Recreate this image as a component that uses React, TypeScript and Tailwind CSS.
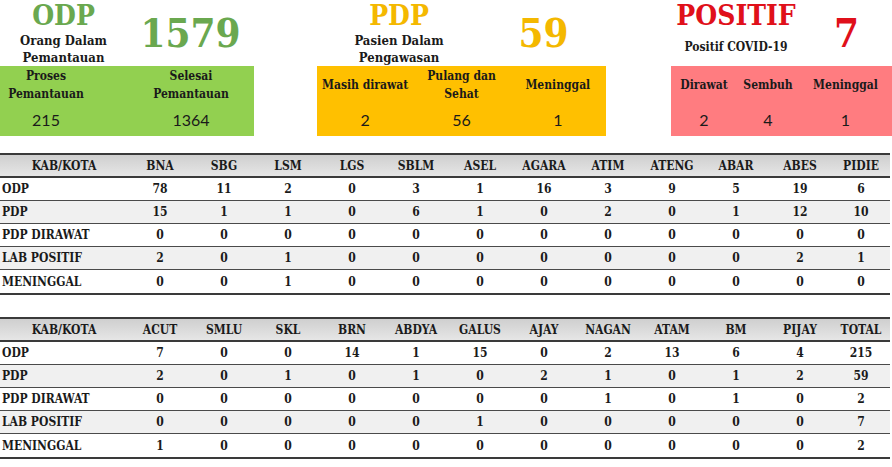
import React from 'react';

const serif = { fontFamily: '"DejaVu Serif Condensed", "DejaVu Serif", serif' };
const sans = { fontFamily: 'Lato, "Open Sans", sans-serif' };

type Row = { label: string; values: number[] };

const table1Cols = ['BNA', 'SBG', 'LSM', 'LGS', 'SBLM', 'ASEL', 'AGARA', 'ATIM', 'ATENG', 'ABAR', 'ABES', 'PIDIE'];
const table1Rows: Row[] = [
  { label: 'ODP', values: [78, 11, 2, 0, 3, 1, 16, 3, 9, 5, 19, 6] },
  { label: 'PDP', values: [15, 1, 1, 0, 6, 1, 0, 2, 0, 1, 12, 10] },
  { label: 'PDP DIRAWAT', values: [0, 0, 0, 0, 0, 0, 0, 0, 0, 0, 0, 0] },
  { label: 'LAB POSITIF', values: [2, 0, 1, 0, 0, 0, 0, 0, 0, 0, 2, 1] },
  { label: 'MENINGGAL', values: [0, 0, 1, 0, 0, 0, 0, 0, 0, 0, 0, 0] },
];

const table2Cols = ['ACUT', 'SMLU', 'SKL', 'BRN', 'ABDYA', 'GALUS', 'AJAY', 'NAGAN', 'ATAM', 'BM', 'PIJAY', 'TOTAL'];
const table2Rows: Row[] = [
  { label: 'ODP', values: [7, 0, 0, 14, 1, 15, 0, 2, 13, 6, 4, 215] },
  { label: 'PDP', values: [2, 0, 1, 0, 1, 0, 2, 1, 0, 1, 2, 59] },
  { label: 'PDP DIRAWAT', values: [0, 0, 0, 0, 0, 0, 0, 1, 0, 1, 0, 2] },
  { label: 'LAB POSITIF', values: [0, 0, 0, 0, 0, 1, 0, 0, 0, 0, 0, 7] },
  { label: 'MENINGGAL', values: [1, 0, 0, 0, 0, 0, 0, 0, 0, 0, 0, 2] },
];

// one cell of a coloured summary box: label on top, number below
function Stat({ label, value }: { label: React.ReactNode; value: number }) {
  return (
    <div className="flex flex-col">
      <div className="h-[38px] flex items-center justify-center text-center text-[12px] leading-[18px] font-bold text-[#1a1a1a]" style={serif}>
        {label}
      </div>
      <div className="h-[32px] flex items-center justify-center text-[16px] text-[#1a1a1a]" style={sans}>
        {value}
      </div>
    </div>
  );
}

function DataTable({ cols, rows }: { cols: string[]; rows: Row[] }) {
  return (
    <div className="w-[890px] border-t-2 border-b-2 border-[#3a3a3a] text-[12px] font-bold text-[#1a1a1a]" style={serif}>
      <div className="grid grid-cols-[128px_repeat(11,64px)_58px] h-[23px] items-center bg-gradient-to-b from-[#cfcfcf] to-[#e6e6e6] border-b-2 border-[#3a3a3a]">
        <div className="text-center">KAB/KOTA</div>
        {cols.map((c) => (
          <div key={c} className="text-center">{c}</div>
        ))}
      </div>
      {rows.map((r, i) => (
        <div
          key={r.label}
          className={`grid grid-cols-[128px_repeat(11,64px)_58px] h-[23px] items-center ${
            i % 2 === 1 ? 'bg-[#f0f0f0]' : 'bg-white'
          } ${i < rows.length - 1 ? 'border-b border-[#4a4a4a]' : ''}`}
        >
          <div className="pl-[2px]">{r.label}</div>
          {r.values.map((v, j) => (
            <div key={j} className="text-center">{v}</div>
          ))}
        </div>
      ))}
    </div>
  );
}

export default function App() {
  return (
    <div className="w-[892px] h-[467px] bg-white overflow-hidden">
      {/* summary boxes */}
      <div className="flex">
        {/* ODP */}
        <div className="w-[254px] flex flex-col">
          <div className="h-[66px] flex">
            <div className="w-[127px] flex flex-col items-center" style={serif}>
              <div className="text-[28px] leading-[28px] pt-[2px] font-bold text-[#6aa84f]">ODP</div>
              <div className="mt-[2px] text-[13px] leading-[17px] font-bold text-[#1a1a1a] text-center">
                Orang Dalam<br />Pemantauan
              </div>
            </div>
            <div className="flex-1 flex items-center justify-center text-[40px] leading-none font-bold text-[#6aa84f]" style={serif}>
              1579
            </div>
          </div>
          <div className="h-[70px] bg-[#92d050] grid grid-cols-[92px_36px_126px]">
            <Stat label={<>Proses<br />Pemantauan</>} value={215} />
            <div />
            <Stat label={<>Selesai<br />Pemantauan</>} value={1364} />
          </div>
        </div>

        {/* PDP */}
        <div className="ml-[63px] w-[289px] flex flex-col">
          <div className="h-[66px] flex">
            <div className="w-[164px] flex flex-col items-center" style={serif}>
              <div className="text-[28px] leading-[28px] pt-[2px] font-bold text-[#f4b800]">PDP</div>
              <div className="mt-[2px] text-[13px] leading-[17px] font-bold text-[#1a1a1a] text-center">
                Pasien Dalam<br />Pengawasan
              </div>
            </div>
            <div className="flex-1 flex items-center justify-center text-[40px] leading-none font-bold text-[#f4b800]" style={serif}>
              59
            </div>
          </div>
          <div className="h-[70px] bg-[#ffc000] grid grid-cols-3">
            <Stat label="Masih dirawat" value={2} />
            <Stat label={<>Pulang dan<br />Sehat</>} value={56} />
            <Stat label="Meninggal" value={1} />
          </div>
        </div>

        {/* POSITIF */}
        <div className="ml-[65px] flex-1 flex flex-col">
          <div className="h-[66px] flex">
            <div className="w-[130px] flex flex-col items-center" style={serif}>
              <div className="text-[28px] leading-[30px] pt-[1px] font-bold text-[#e0101a]">POSITIF</div>
              <div className="mt-[8px] text-[12px] leading-[17px] font-bold text-[#1a1a1a]">Positif COVID-19</div>
            </div>
            <div className="flex-1 flex items-center justify-center text-[40px] leading-none font-bold text-[#e0101a]" style={serif}>
              7
            </div>
          </div>
          <div className="h-[70px] bg-[#ff7c80] grid grid-cols-[66px_62px_1fr]">
            <Stat label="Dirawat" value={2} />
            <Stat label="Sembuh" value={4} />
            <Stat label="Meninggal" value={1} />
          </div>
        </div>
      </div>

      <div className="mt-[17px]">
        <DataTable cols={table1Cols} rows={table1Rows} />
      </div>
      <div className="mt-[22px]">
        <DataTable cols={table2Cols} rows={table2Rows} />
      </div>
    </div>
  );
}
